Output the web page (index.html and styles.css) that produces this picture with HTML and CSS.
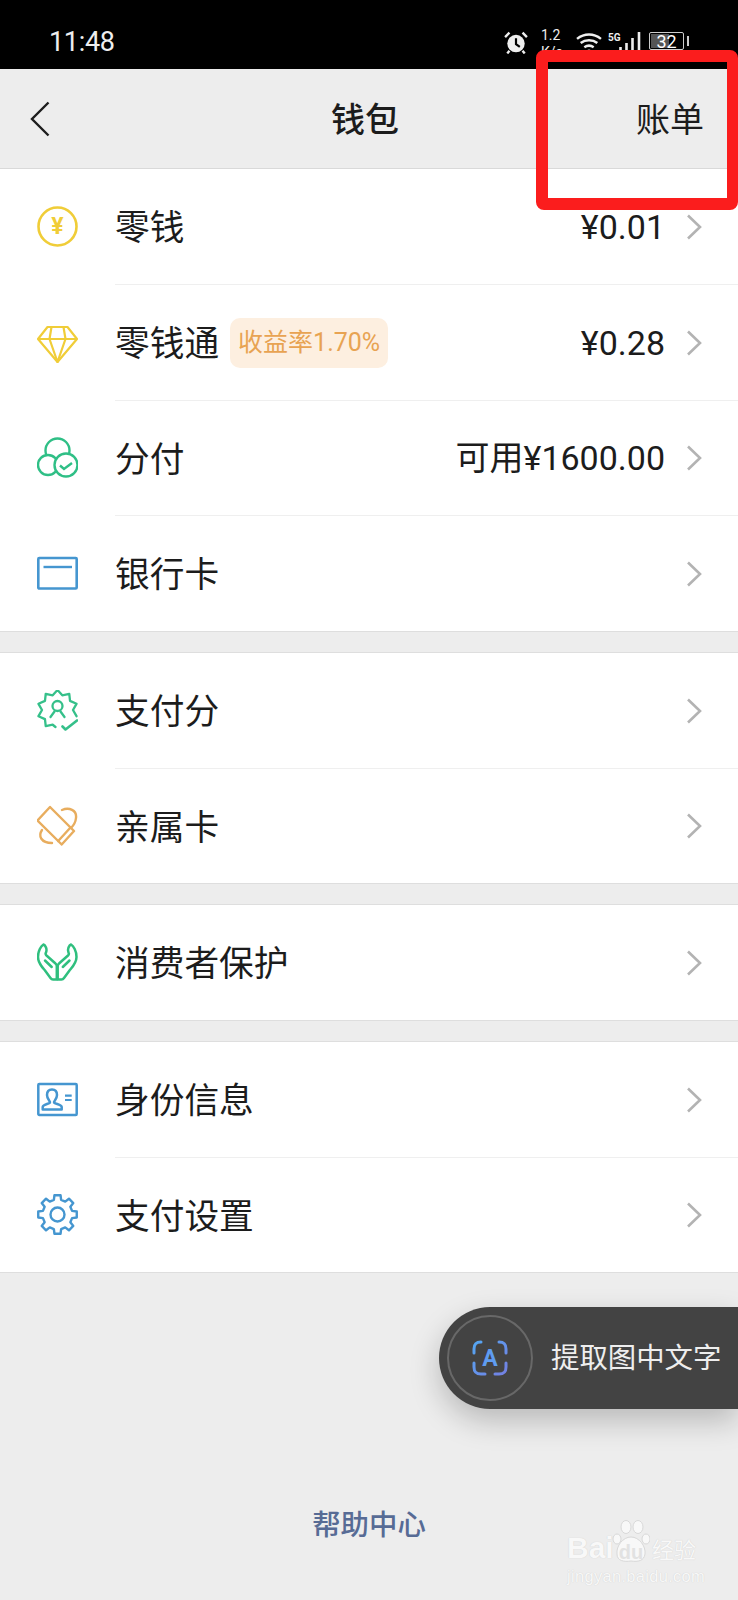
FILE: index.html
```html
<!DOCTYPE html>
<html lang="zh-CN">
<head>
<meta charset="utf-8">
<title>钱包</title>
<link rel="stylesheet" href="styles.css">
</head>
<body>
<div class="page">
  <header class="status">
    <span class="time">11:48</span>
    <div class="status-icons">
      <svg class="alarm" viewBox="0 0 22 21"><circle cx="11" cy="11.5" r="8" fill="#eee"/><path d="M11 6.5V12l3.5 2.5" fill="none" stroke="#000" stroke-width="2"/><path d="M1 5.5 5 1.5M21 5.5 17 1.5M5 18l-2 2.5M17 18l2 2.5" stroke="#eee" stroke-width="2.2" fill="none"/></svg>
      <div class="speed"><span>1.2</span><span>K/s</span></div>
      <svg class="wifi" viewBox="0 0 25 19"><path d="M1 6.5C8 1 17 1 24 6.5M4.5 10.5C9 7 16 7 20.5 10.5M8 14.5c3-2 6-2 9 0" fill="none" stroke="#eee" stroke-width="2.4"/><path d="M10.5 17.5c1.2-1 2.8-1 4 0L12.5 19.5z" fill="#eee"/></svg>
      <div class="signal">
        <span class="net">5G</span>
        <svg class="bars" viewBox="0 0 23 18"><path d="M1.5 18v-3M7.5 18v-7M13.5 18V6M20 18V0" stroke="#eee" stroke-width="2.6" fill="none"/></svg>
      </div>
      <div class="battery-wrap"><div class="battery">32</div><span class="tip"></span></div>
    </div>
  </header>

  <nav class="nav">
    <svg class="back" viewBox="0 0 20 36"><path d="M18.5 1.5 2 18l16.5 16.500" fill="none" stroke="#1d1d1d" stroke-width="2.400"/></svg>
    <h1 class="title">钱包</h1>
    <a class="bill">账单</a>
  </nav>

  <section class="group first">
    <div class="row">
      <div class="icon"><svg viewBox="0 0 41 41"><circle cx="20.500" cy="20.500" r="19" fill="none" stroke="#f0cd38" stroke-width="2.600"/><text x="20.500" y="28" text-anchor="middle" class="coin-mark">¥</text></svg></div>
      <div class="body"><span class="label">零钱</span><span class="value">¥0.01</span><svg class="chev" viewBox="0 0 16 26"><path d="M2 1.500 14 13 2 24.500" /></svg></div>
    </div>
    <div class="row">
      <div class="icon"><svg viewBox="0 0 41 41"><g fill="none" stroke="#f0cd38" stroke-width="2.200" stroke-linejoin="round"><path d="M10.500 5H30.500L40 17 20.500 40 1 17Z"/><path d="M1 17H40M14.500 5 12.500 17 20.500 40 28.500 17 26.500 5"/></g></svg></div>
      <div class="body"><span class="label">零钱通</span><span class="badge">收益率1.70%</span><span class="value">¥0.28</span><svg class="chev" viewBox="0 0 16 26"><path d="M2 1.500 14 13 2 24.500" /></svg></div>
    </div>
    <div class="row">
      <div class="icon"><svg viewBox="0 0 41 41"><g fill="#fff" stroke="#2fbf86" stroke-width="2.400"><circle cx="20.500" cy="13.500" r="12"/><circle cx="11" cy="28" r="10"/><circle cx="29" cy="28" r="11.500"/><path d="M23 28.500l4 3.500 8-6" fill="none"/></g></svg></div>
      <div class="body"><span class="label">分付</span><span class="value">可用¥1600.00</span><svg class="chev" viewBox="0 0 16 26"><path d="M2 1.500 14 13 2 24.500" /></svg></div>
    </div>
    <div class="row">
      <div class="icon"><svg viewBox="0 0 41 41"><rect x="1.300" y="5" width="38.400" height="30.500" rx="1" fill="none" stroke="#4596d0" stroke-width="2.600"/><path d="M6.500 14H35" stroke="#4596d0" stroke-width="2.400"/></svg></div>
      <div class="body"><span class="label">银行卡</span><svg class="chev" viewBox="0 0 16 26"><path d="M2 1.500 14 13 2 24.500" /></svg></div>
    </div>
  </section>

  <section class="group">
    <div class="row">
      <div class="icon"><svg viewBox="0 0 41 41"><g transform="translate(20.500 20)" fill="none" stroke="#35c08a" stroke-width="2.300" stroke-linejoin="round" stroke-linecap="round"><polyline points="19.020,6.180 15.500,0 19.020,-6.180 12.540,-9.110 11.760,-16.180 4.790,-14.740 0,-20 -4.790,-14.740 -11.760,-16.180 -12.540,-9.110 -19.020,-6.180 -15.500,0 -19.020,6.180 -12.540,9.110 -11.760,16.180 -4.790,14.740 -2,17"/><circle cx="0" cy="-4" r="5"/><path d="M-7 7-3 1.500M7 7 3 1.500"/><path d="M5 16.500 8 19.500 19.500 10.500" stroke-width="2.600"/></g></svg></div>
      <div class="body"><span class="label">支付分</span><svg class="chev" viewBox="0 0 16 26"><path d="M2 1.500 14 13 2 24.500" /></svg></div>
    </div>
    <div class="row">
      <div class="icon"><svg viewBox="0 0 41 41"><g fill="none" stroke="#e8ad5e" stroke-width="2.400" stroke-linejoin="round" stroke-linecap="round"><path d="M13 2 37 26 24.700 39.500 .5 15.500Z"/><path d="M33.500 22.500 21.200 36"/><path d="M25 5C32 2 40 5 39 13 38.500 18 36 21 34 23"/><path d="M5 25C1 31 4 38 15 38"/></g></svg></div>
      <div class="body"><span class="label">亲属卡</span><svg class="chev" viewBox="0 0 16 26"><path d="M2 1.500 14 13 2 24.500" /></svg></div>
    </div>
  </section>

  <section class="group">
    <div class="row">
      <div class="icon"><svg viewBox="0 0 41 41"><g fill="none" stroke="#2fbf7e" stroke-width="2.500" stroke-linejoin="round" stroke-linecap="round"><path d="M6.500 2.500C4 4 1 9 1 15 1 21 5 25 8 28.500L13.500 36Q14.500 37.500 16 37.500H19.800V24.500Q19.800 22.500 18.500 21.500L9.500 13.500Q8 12 9 10.500 10 8 9 5.500 8 3 6.500 2.500Z"/><path d="M8 18.500 14.700 25"/></g><g fill="none" stroke="#2fbf7e" stroke-width="2.500" stroke-linejoin="round" stroke-linecap="round" transform="matrix(-1 0 0 1 40.500 0)"><path d="M6.500 2.500C4 4 1 9 1 15 1 21 5 25 8 28.500L13.500 36Q14.500 37.500 16 37.500H19.800V24.500Q19.800 22.500 18.500 21.500L9.500 13.500Q8 12 9 10.500 10 8 9 5.500 8 3 6.500 2.500Z"/><path d="M8 18.500 14.700 25"/></g></svg></div>
      <div class="body"><span class="label">消费者保护</span><svg class="chev" viewBox="0 0 16 26"><path d="M2 1.500 14 13 2 24.500" /></svg></div>
    </div>
  </section>

  <section class="group">
    <div class="row">
      <div class="icon"><svg viewBox="0 0 41 41"><g fill="none" stroke="#4596d0" stroke-width="2.500" stroke-linejoin="round"><rect x="1.300" y="5" width="38.400" height="31" rx="1"/><path d="M5.700 30.500V28C5.700 25.500 12 25 13 23.500 13.500 22.500 10 20.500 10 16 10 12 12.500 10.500 15 10.500S20 12 20 16C20 20.500 16.500 22.500 17 23.500 18 25 24.700 25.500 24.700 28V30.500Z"/><path d="M28 16.700H34.700M28 21H34.700" stroke-width="2.200"/></g></svg></div>
      <div class="body"><span class="label">身份信息</span><svg class="chev" viewBox="0 0 16 26"><path d="M2 1.500 14 13 2 24.500" /></svg></div>
    </div>
    <div class="row">
      <div class="icon"><svg viewBox="0 0 41 41"><g transform="translate(20.500 20.500)" fill="none" stroke="#4596d0" stroke-width="2.400" stroke-linejoin="round"><polygon points="3.050,-19.260 3.630,-14.550 7.730,-12.860 11.460,-15.780 15.780,-11.460 12.860,-7.730 14.550,-3.630 19.260,-3.050 19.260,3.050 14.550,3.630 12.860,7.730 15.780,11.460 11.460,15.780 7.730,12.860 3.630,14.550 3.050,19.260 -3.050,19.260 -3.630,14.550 -7.730,12.860 -11.460,15.780 -15.780,11.460 -12.860,7.730 -14.550,3.630 -19.260,3.050 -19.260,-3.050 -14.550,-3.630 -12.860,-7.730 -15.780,-11.460 -11.460,-15.780 -7.730,-12.860 -3.630,-14.550 -3.050,-19.260"/><circle r="7"/></g></svg></div>
      <div class="body"><span class="label">支付设置</span><svg class="chev" viewBox="0 0 16 26"><path d="M2 1.500 14 13 2 24.500" /></svg></div>
    </div>
  </section>

  <footer class="footer"><a class="help">帮助中心</a></footer>

  <div class="redbox"></div>

  <div class="toast">
    <div class="ocr">
      <svg viewBox="0 0 36 36"><defs><linearGradient id="ocrg" x1="0" y1="0" x2="1" y2="1"><stop offset="0" stop-color="#55a6f2"/><stop offset="1" stop-color="#7380e2"/></linearGradient></defs><path d="M9 2C4 2 2 4 2 9V13M27 2C32 2 34 4 34 9V13M2 23V27C2 32 4 34 9 34H13M34 23V27C34 32 32 34 27 34H23" fill="none" stroke="url(#ocrg)" stroke-width="3" stroke-linecap="round"/><text x="18" y="26" text-anchor="middle" class="ocr-mark">A</text></svg>
    </div>
    <span class="toast-text">提取图中文字</span>
  </div>

  <div class="watermark">
    <div class="wm-top">
      <span class="wm-bai">Bai</span>
      <div class="wm-paw">
        <svg viewBox="0 0 38 44"><g fill="#f8f8f8" stroke="#d8d8d8" stroke-width="1"><ellipse cx="5" cy="19" rx="4" ry="5"/><ellipse cx="14" cy="7" rx="5" ry="6.500"/><ellipse cx="26" cy="7" rx="5" ry="6.500"/><ellipse cx="34" cy="19" rx="4" ry="5"/><path d="M19 17C27 17 34 26 33 34 32 41 26 42 19 41 12 42 5 41 5 34 4 26 11 17 19 17Z"/></g></svg>
        <span class="wm-du">du</span>
      </div>
      <span class="wm-cn">经验</span>
    </div>
    <span class="wm-url">jingyan.baidu.com</span>
  </div>
</div>
</body>
</html>
```

FILE: styles.css
```css
* { box-sizing: border-box; }
html, body { margin: 0; padding: 0; }
body { background: #ededed; font-family: Roboto, "Noto Sans CJK SC", sans-serif; color: #1c1c1c; }
.page { position: relative; width: 738px; height: 1600px; overflow: hidden; background: #ededed; }

.status { height: 69px; background: #000; color: #eee; display: flex; justify-content: space-between; padding: 29px 49px 0 49px; }
.time { font-size: 27px; line-height: 26px; letter-spacing: -.3px; }
.status-icons { display: flex; align-items: flex-start; }
.alarm { width: 24px; height: 23px; margin-top: 2px; }
.speed { display: flex; flex-direction: column; width: 22px; margin-left: 13px; margin-top: -2px; font-size: 14px; line-height: 16.500px; }
.wifi { width: 26px; height: 20px; margin-left: 13px; margin-top: 3px; }
.signal { display: flex; margin-left: 6px; }
.net { font-size: 10px; line-height: 11px; font-weight: 700; width: 11px; margin-top: 3px; }
.bars { width: 23px; height: 18px; margin-top: 3px; }
.battery-wrap { display: flex; align-items: center; margin-left: 7px; margin-top: 3px; }
.battery { width: 35px; height: 18px; border: 1.5px solid #ccc; border-radius: 2px; font-size: 18px; line-height: 15px; text-align: center; color: #fff; background: linear-gradient(90deg, #555 58%, #000 58%); background-clip: content-box; padding: 1px; }
.tip { width: 2px; height: 10px; margin-left: 3px; background: #ccc; }

.nav { height: 100px; display: grid; grid-template-columns: 1fr auto 1fr; align-items: center; padding: 0 34px 0 30px; background: #ededed; border-bottom: 1px solid #d9d9d9; }
.back { width: 20px; height: 36px; }
.title { margin: 2px 4px 0 0; font-size: 34px; line-height: 44px; font-weight: 500; color: #1c1c1c; }
.bill { justify-self: end; margin-top: 2px; font-size: 34px; line-height: 44px; color: #1c1c1c; }

.group { background: #fff; border-top: 1px solid #dedede; border-bottom: 1px solid #dedede; margin-top: 20px; }
.group.first { border-top: 0; margin-top: 0; }
.row { display: flex; height: 115px; }
.first .row:nth-child(even) { height: 116px; }
.icon { width: 115px; flex: none; display: flex; align-items: center; padding-left: 37px; }
.icon svg { width: 41px; height: 41px; display: block; }
.body { flex: 1; display: flex; align-items: center; padding-right: 36px; }
.row + .row .body { border-top: 1px solid #efefef; }
.label { margin-top: 3px; font-size: 34.700px; line-height: 44px; }
.value { margin-left: auto; font-size: 34px; line-height: 44px; }
.chev { width: 16px; height: 26px; margin-left: 21px; flex: none; }
.label + .chev { margin-left: auto; }
.chev path { fill: none; stroke: #b3b3b3; stroke-width: 2.600; }
.badge { margin-left: 11px; height: 50px; padding: 0 8px; border-radius: 10px; background: #fdefe0; color: #e8a352; font-size: 25px; line-height: 50px; }
.coin-mark { font-size: 23px; font-weight: 700; fill: #f0cd38; font-family: Roboto, sans-serif; }
.ocr-mark { font-size: 23px; font-weight: 700; fill: #5f9cf0; font-family: Roboto, sans-serif; }

.footer { display: flex; justify-content: center; padding-top: 236px; }
.help { font-size: 28.400px; line-height: 34px; font-weight: 500; color: #576b95; }

.redbox { position: absolute; left: 536px; top: 50px; width: 202px; height: 160px; border: 12px solid #fb1d1d; border-right-width: 11px; border-radius: 8px; }

.toast { position: absolute; left: 439px; top: 1307px; right: 0; height: 102px; background: #434343; border-radius: 51px 0 0 51px; display: flex; align-items: center; padding-left: 8px; box-shadow: 0 12px 30px rgba(0,0,0,.22); }
.ocr { width: 86px; height: 86px; border: 2px solid #686868; border-radius: 50%; display: flex; align-items: center; justify-content: center; flex: none; }
.ocr svg { width: 36px; height: 36px; }
.toast-text { margin: 0 0 6px 18px; font-size: 28.400px; color: #eee; white-space: nowrap; }

.watermark { position: absolute; left: 567px; top: 1520px; width: 134px; display: flex; flex-direction: column; color: #f8f8f8; text-shadow: 0 0 1px #c8c8c8; }
.wm-top { display: flex; align-items: flex-end; height: 44px; }
.wm-bai { font-family: "Liberation Sans", sans-serif; font-weight: 700; font-size: 30px; line-height: 32px; width: 45px; flex: none; }
.wm-paw { position: relative; width: 38px; height: 44px; flex: none; }
.wm-paw svg { width: 38px; height: 44px; display: block; }
.wm-du { position: absolute; left: 5px; bottom: 1px; width: 28px; text-align: center; font-family: "Liberation Sans", sans-serif; font-weight: 700; font-size: 20px; line-height: 22px; color: #e2e2e2; text-shadow: none; }
.wm-cn { margin-left: 2px; font-size: 22px; line-height: 26px; white-space: nowrap; }
.wm-url { font-size: 16.500px; line-height: 20px; margin-top: 2px; white-space: nowrap; font-family: "Liberation Sans", sans-serif; letter-spacing: .3px; }
```
